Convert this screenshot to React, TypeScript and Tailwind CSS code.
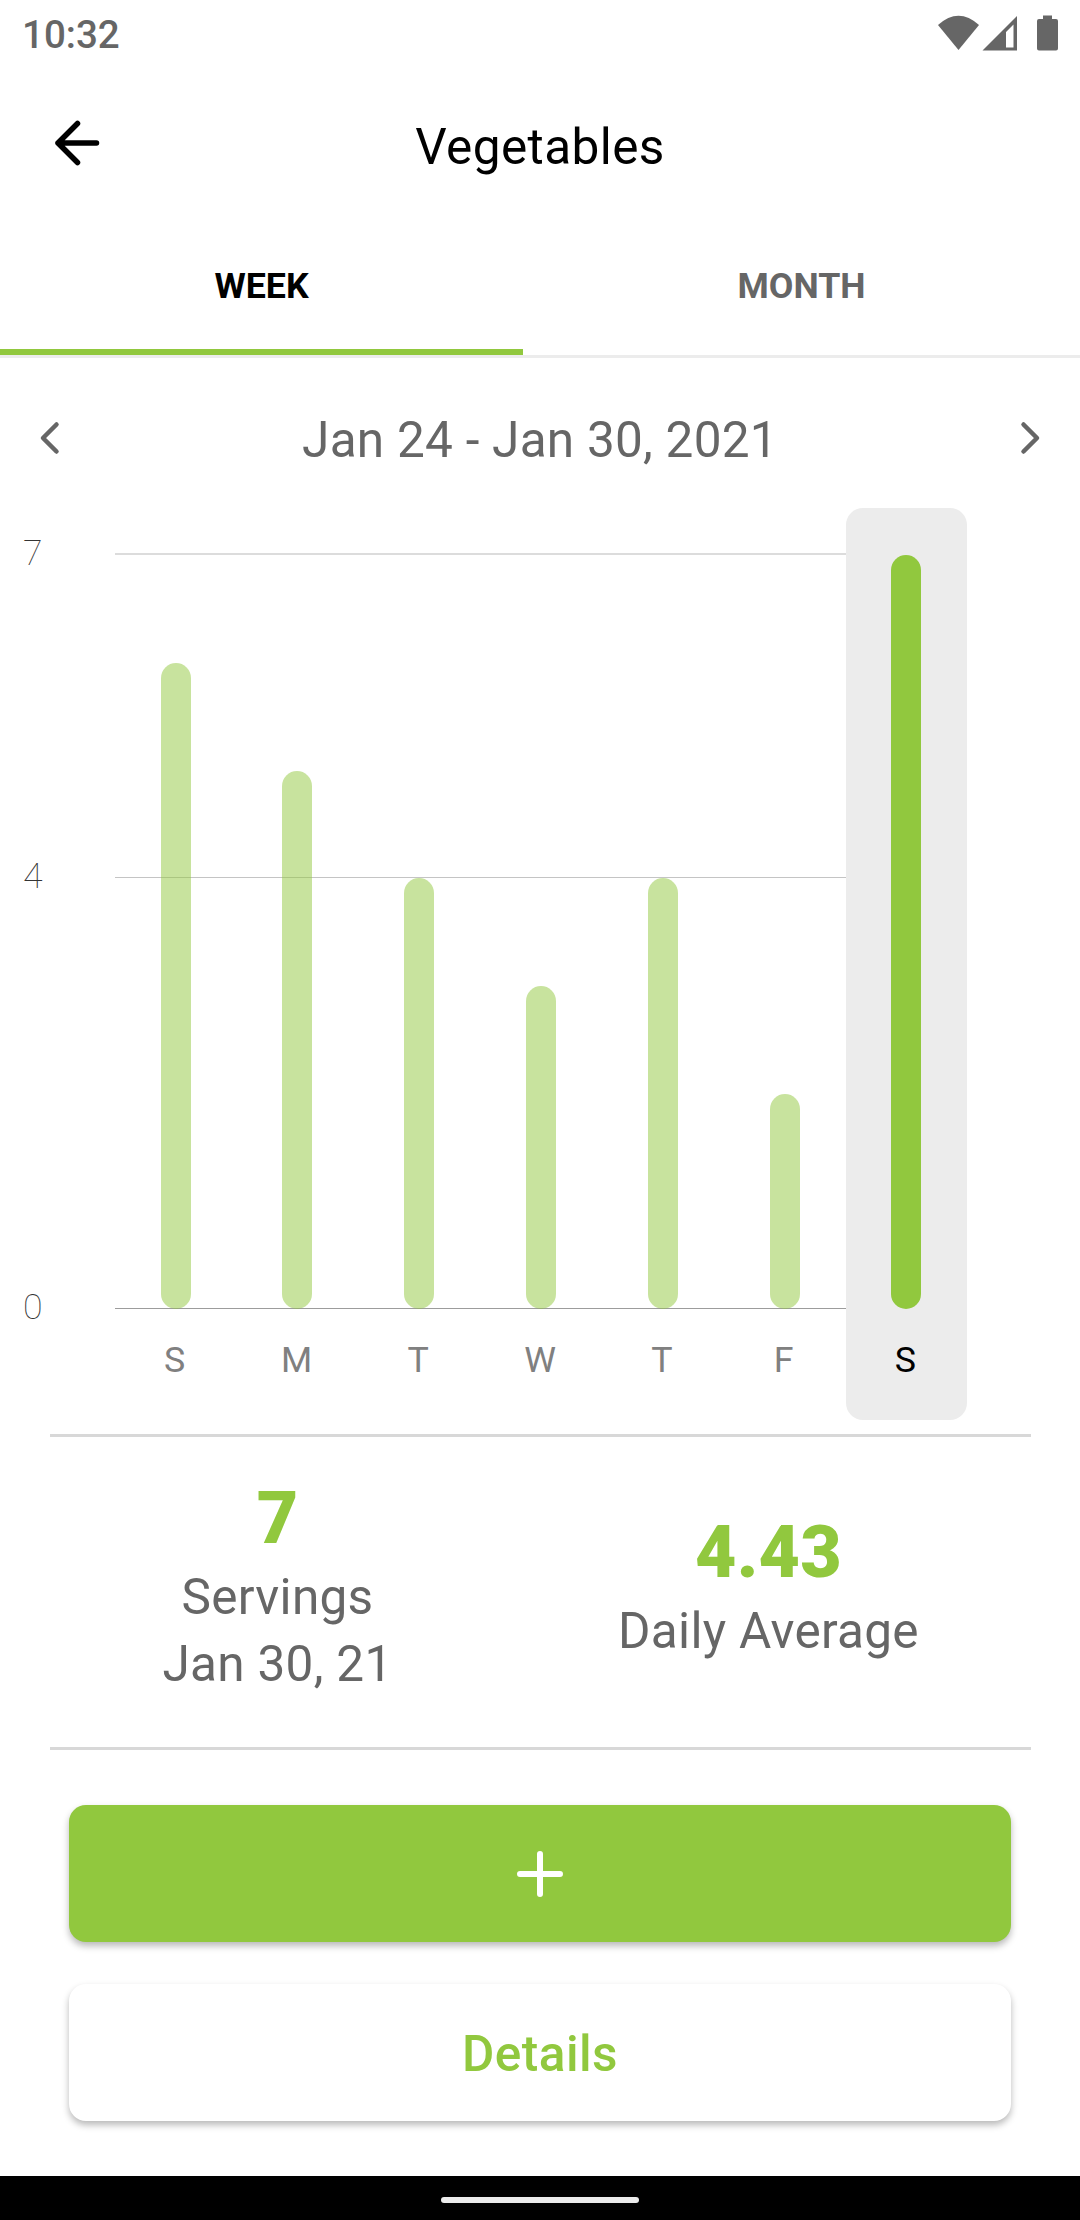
import { useState } from 'react'

const days = [
  { label: 'S', servings: 6 },
  { label: 'M', servings: 5 },
  { label: 'T', servings: 4 },
  { label: 'W', servings: 3 },
  { label: 'T', servings: 4 },
  { label: 'F', servings: 2 },
  { label: 'S', servings: 7 },
]

// Height of one serving in the chart
const UNIT = 107.7

function StatusBar() {
  return (
    <div className="flex h-[70px] items-center justify-between pl-[22px] pr-[22px] text-[#666666]">
      <span className="text-[38.5px] font-medium leading-none">10:32</span>
      <svg width="120" height="36" viewBox="0 0 120 36" fill="currentColor" className="mb-[5px]">
        <path d="M0 10 Q20.5 -8.5 41 10 L20.5 35 Z" />
        <path fillRule="evenodd" d="M44.5 35.5 L79 1 V35.5 Z M68 17 V32.5 H75.5 V9.5 Z" />
        <path d="M105 0.5 H114 V4 H118 Q120 4 120 6 V33.5 Q120 35.5 118 35.5 H101 Q99 35.5 99 33.5 V6 Q99 4 101 4 H105 Z" />
      </svg>
    </div>
  )
}

function Header() {
  return (
    <header className="grid h-[155px] grid-cols-[120px_1fr_120px] items-center">
      <button className="mb-[9px] pl-[54px]">
        <svg width="46" height="46" viewBox="0 0 46 46" fill="none" stroke="currentColor" strokeWidth="5.5" strokeLinecap="round" strokeLinejoin="round">
          <path d="M42.5 23 H4 M23.5 3.5 L4 23 L23.5 42.5" />
        </svg>
      </button>
      <h1 className="text-center text-[49.5px] leading-none tracking-[0.4px]">Vegetables</h1>
    </header>
  )
}

function Chart({ selected, onSelect }: { selected: number; onSelect: (i: number) => void }) {
  return (
    <div className="grid h-[912px]">
      {/* Axis labels and grid lines */}
      <div className="col-start-1 row-start-1 pt-[23px] text-[35.75px] font-thin text-[#333333]">
        <div className="flex h-[46px] items-center pl-[23px]">
          <span className="w-[92px]">7</span>
          <span className="h-0.5 w-[731px] bg-[#dcdcdc]" />
        </div>
        <div className="mt-[277px] flex h-[47px] items-center pl-[23px]">
          <span className="w-[92px] pb-0.5">4</span>
          <span className="h-px w-[731px] bg-[#c4c4c4]" />
        </div>
        <div className="mt-[384px] flex h-[47px] items-center pl-[23px]">
          <span className="w-[92px] pb-0.5">0</span>
          <span className="h-px w-[731px] bg-[#9c9c9c]" />
        </div>
      </div>

      {/* Bars */}
      <div className="col-start-1 row-start-1 flex pl-[114.8px]">
        {days.map((day, i) => (
          <button
            key={i}
            onClick={() => onSelect(i)}
            className={`flex w-[121.8px] flex-col items-center justify-end rounded-[17px] pb-[39px] ${
              selected === i ? 'bg-[#ececec] text-black' : 'text-[#808080]'
            }`}
          >
            <span
              className={`w-[30px] rounded-full bg-[#91c83e] ${selected === i ? '' : 'opacity-50'}`}
              style={{ height: day.servings * UNIT }}
            />
            <span className="mt-[31px] pr-[2px] text-[35.75px] leading-[41px]">{day.label}</span>
          </button>
        ))}
      </div>
    </div>
  )
}

export default function App() {
  const [tab, setTab] = useState('week')
  const [selected, setSelected] = useState(6)

  return (
    <div className="h-[2220px] w-[1080px] overflow-hidden bg-white font-['Roboto',sans-serif] text-black">
      <StatusBar />
      <Header />

      {/* Tabs */}
      <div className="flex h-[133px] border-b-3 border-[#ececec] text-[35.75px] font-bold">
        <button
          onClick={() => setTab('week')}
          className={`w-[523px] border-b-6 ${tab === 'week' ? 'border-[#91c83e] text-black' : 'border-transparent text-[#666666]'}`}
        >
          WEEK
        </button>
        <button
          onClick={() => setTab('month')}
          className={`w-[557px] border-b-6 ${tab === 'month' ? 'border-[#91c83e] text-black' : 'border-transparent text-[#666666]'}`}
        >
          MONTH
        </button>
      </div>

      {/* Date range */}
      <div className="flex h-[150px] items-center justify-between px-[39px] pt-[15px] text-[#666666]">
        <svg width="21" height="34" viewBox="0 0 21 34" fill="none" stroke="currentColor" strokeWidth="4.5" strokeLinecap="round" strokeLinejoin="round" className="mb-[6px]">
          <path d="M17.5 3.5 L4 17 L17.5 30.5" />
        </svg>
        <span className="text-[49.5px] leading-none tracking-[0.25px]">Jan 24 - Jan 30, 2021</span>
        <svg width="21" height="34" viewBox="0 0 21 34" fill="none" stroke="currentColor" strokeWidth="4.5" strokeLinecap="round" strokeLinejoin="round" className="mb-[6px]">
          <path d="M3.5 3.5 L17 17 L3.5 30.5" />
        </svg>
      </div>

      <Chart selected={selected} onSelect={setSelected} />

      {/* Stats */}
      <div className="ml-[50px] mt-[14px] h-[3px] w-[981px] bg-[#d8d8d8]" />
      <div className="flex h-[310px] items-center pb-[12px] pl-8 text-center text-[49.5px] leading-[67px] tracking-[0.3px] text-[#666666]">
        <div className="w-[491px]">
          <p className="text-[71.5px] font-black leading-[90px] text-[#91c83e]">{days[selected].servings}</p>
          <p>Servings</p>
          <p>Jan {24 + selected}, 21</p>
        </div>
        <div className="w-[491px]">
          <p className="text-[71.5px] font-black leading-[90px] text-[#91c83e]">4.43</p>
          <p>Daily Average</p>
        </div>
      </div>
      <div className="ml-[50px] h-[3px] w-[981px] bg-[#d8d8d8]" />

      {/* Actions */}
      <div className="flex flex-col gap-[42px] px-[69px] py-[55px]">
        <button className="flex h-[137px] items-center justify-center rounded-[17px] bg-[#91c83e] text-white shadow-[0_4px_7px_rgba(0,0,0,0.28)]">
          <svg width="48" height="48" viewBox="0 0 48 48" stroke="currentColor" strokeWidth="6" strokeLinecap="round">
            <path d="M24 4 V44 M4 24 H44" />
          </svg>
        </button>
        <button className="h-[137px] rounded-[17px] bg-white pt-1 text-[49.5px] font-medium leading-none tracking-[0.5px] text-[#91c83e] shadow-[0_4px_7px_rgba(0,0,0,0.28)]">
          Details
        </button>
      </div>

      {/* Gesture bar */}
      <div className="flex h-11 items-center justify-center bg-black pb-px pt-1">
        <span className="h-1.5 w-[198px] rounded-full bg-[#ececec]" />
      </div>
    </div>
  )
}
